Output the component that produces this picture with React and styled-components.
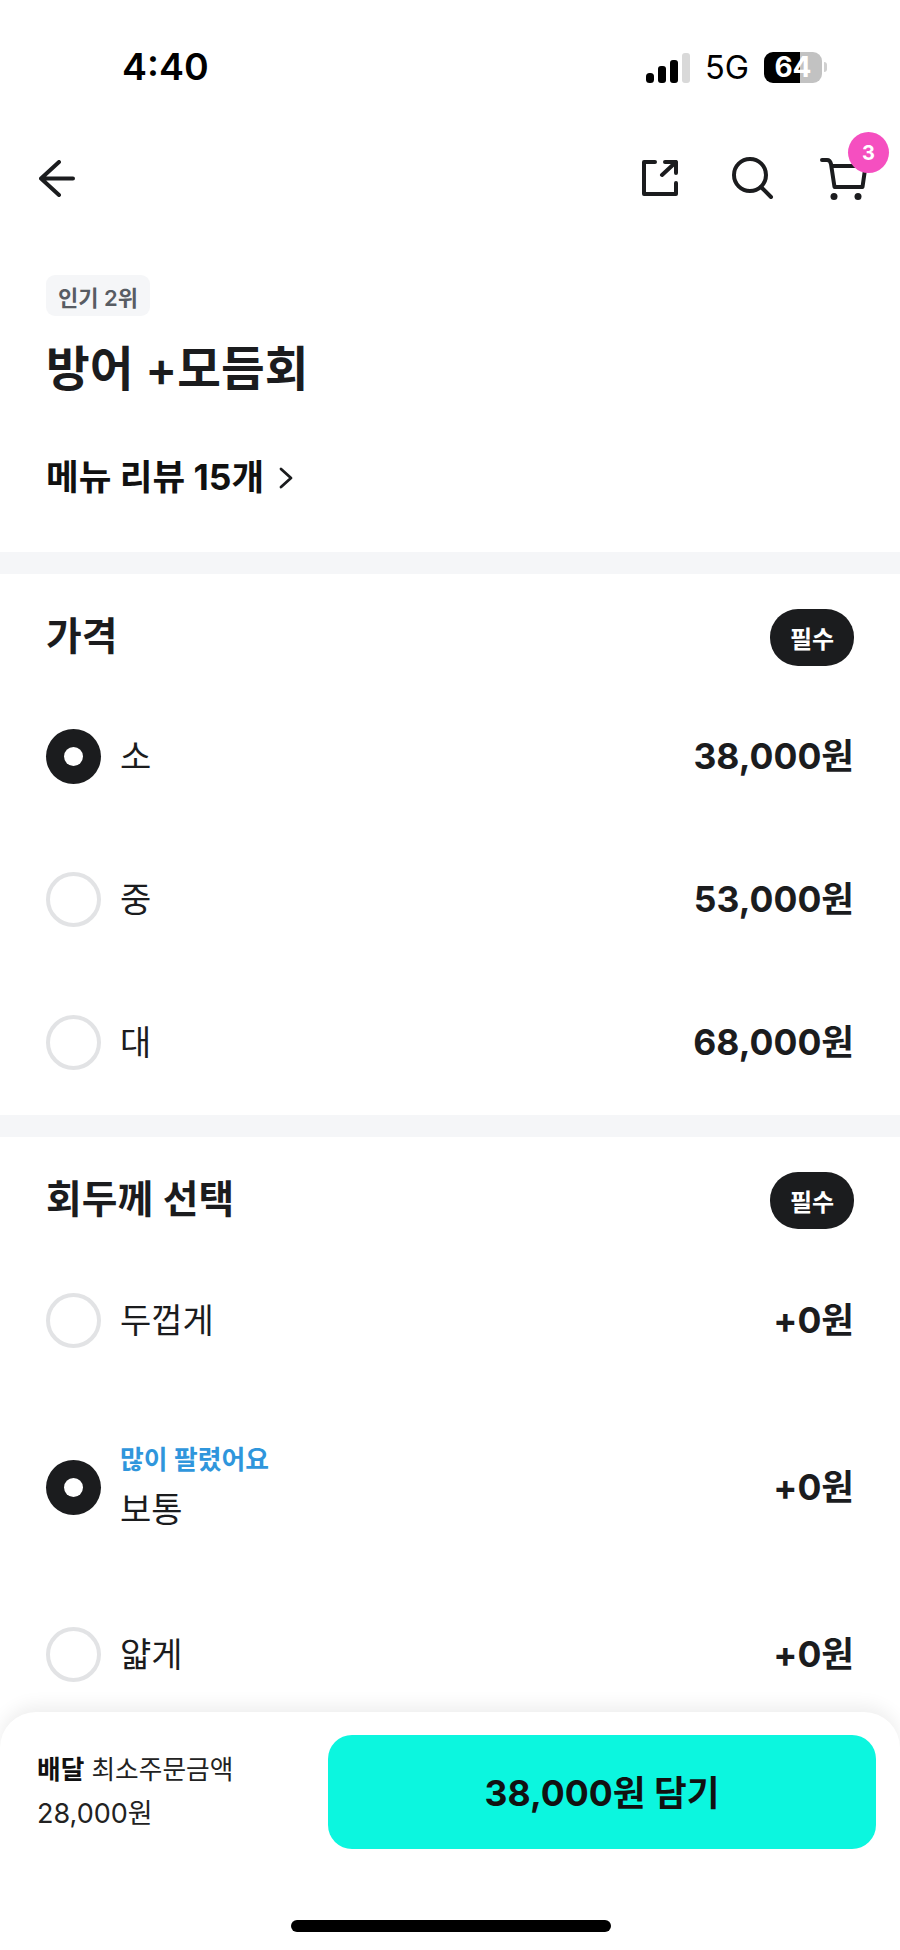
import styled, { createGlobalStyle } from "styled-components";

const GlobalStyle = createGlobalStyle`
  * { box-sizing: border-box; }
  html, body { margin: 0; padding: 0; background: #ffffff; }
  body {
    font-family: "Inter", "Noto Sans CJK KR", sans-serif;
    color: #1b1c1e;
  }
`;

const priceOptions = [
  { name: "소", price: "38,000원", checked: true },
  { name: "중", price: "53,000원" },
  { name: "대", price: "68,000원" },
];

const thicknessOptions = [
  { name: "두껍게", price: "+0원", height: 167 },
  { name: "보통", price: "+0원", hint: "많이 팔렸어요", checked: true, height: 167 },
  { name: "얇게", price: "+0원", height: 167 },
];

function BackIcon() {
  return (
    <svg width="36" height="37" viewBox="0 0 36 37" fill="none" stroke="#1b1c1e" strokeWidth="4" strokeLinecap="round" strokeLinejoin="round">
      <path d="M34 18.500H2M20 2 2 18.500 20 35" />
    </svg>
  );
}

function ShareIcon() {
  return (
    <svg width="36" height="36" viewBox="0 0 36 36" fill="none" stroke="#1b1c1e" strokeWidth="4" strokeLinecap="round" strokeLinejoin="round">
      <path d="M13 2H2v32h32V23" />
      <path d="M23 2h11v11M34 2 20 15" />
    </svg>
  );
}

function SearchIcon() {
  return (
    <svg width="42" height="42" viewBox="0 0 42 42" fill="none" stroke="#1b1c1e" strokeWidth="4" strokeLinecap="round">
      <circle cx="18" cy="18" r="16" />
      <path d="M29 30 39 40" />
    </svg>
  );
}

function CartIcon() {
  return (
    <svg width="48" height="44" viewBox="0 0 48 44" fill="none" stroke="#1b1c1e" strokeWidth="4" strokeLinecap="round" strokeLinejoin="round">
      <path d="M3 3h5c2 0 3.500 1.500 4 4l3.500 23h28l3-21H13" />
      <circle cx="15" cy="39.500" r="3.500" fill="#1b1c1e" stroke="none" />
      <circle cx="39" cy="39.500" r="3.500" fill="#1b1c1e" stroke="none" />
    </svg>
  );
}

function SignalIcon() {
  return (
    <svg width="44" height="30" viewBox="0 0 44 30">
      <rect x="0" y="20" width="8" height="10" rx="3.500" fill="#000" />
      <rect x="12" y="13" width="8" height="17" rx="3" fill="#000" />
      <rect x="24" y="7" width="8" height="23" rx="3" fill="#000" />
      <rect x="36" y="0" width="8" height="30" rx="3" fill="#d9d9d9" />
    </svg>
  );
}

function Chevron() {
  return (
    <svg width="16" height="24" viewBox="0 0 16 24" fill="none" stroke="#1b1c1e" strokeWidth="2.800" strokeLinecap="round" strokeLinejoin="round">
      <path d="M3 3l10 9-10 9" />
    </svg>
  );
}

function OptionRow({ option }) {
  return (
    <Row $height={option.height}>
      <Radio $checked={option.checked} />
      <RowLabel>
        {option.hint && <Hint>{option.hint}</Hint>}
        <RowName>{option.name}</RowName>
      </RowLabel>
      <RowPrice>{option.price}</RowPrice>
    </Row>
  );
}

export default function App() {
  return (
    <Page>
      <GlobalStyle />
      <Content>
        <StatusBar>
          <Clock>4:40</Clock>
          <StatusRight>
            <SignalIcon />
            <Network>5G</Network>
            <Battery>
              <BatteryText>64</BatteryText>
            </Battery>
            <BatteryCap />
          </StatusRight>
        </StatusBar>

        <NavBar>
          <BackIcon />
          <NavActions>
            <ShareWrap>
              <ShareIcon />
            </ShareWrap>
            <SearchIcon />
            <CartWrap>
              <CartIcon />
              <CartBadge>3</CartBadge>
            </CartWrap>
          </NavActions>
        </NavBar>

        <Intro>
          <RankTag>인기 2위</RankTag>
          <MenuTitle>방어 +모듬회</MenuTitle>
          <ReviewLink>
            메뉴 리뷰 15개
            <Chevron />
          </ReviewLink>
        </Intro>

        <Divider />

        <Section>
          <SectionHead $height={111}>
            <SectionTitle>가격</SectionTitle>
            <RequiredPill>필수</RequiredPill>
          </SectionHead>
          {priceOptions.map((option) => (
            <OptionRow key={option.name} option={option} />
          ))}
        </Section>

        <Divider />

        <Section>
          <SectionHead $height={100}>
            <SectionTitle>회두께 선택</SectionTitle>
            <RequiredPill>필수</RequiredPill>
          </SectionHead>
          {thicknessOptions.map((option) => (
            <OptionRow key={option.name} option={option} />
          ))}
        </Section>
      </Content>

      <BottomSheet>
        <SheetMain>
          <MinOrder>
            <MinOrderLine>
              <strong>배달</strong> 최소주문금액
            </MinOrderLine>
            <MinOrderLine $amount>28,000원</MinOrderLine>
          </MinOrder>
          <AddButton>38,000원 담기</AddButton>
        </SheetMain>
        <HomeBar />
      </BottomSheet>
    </Page>
  );
}

const Page = styled.div`
  width: 900px;
  height: 1950px;
  display: flex;
  flex-direction: column;
  overflow: hidden;
  background: #ffffff;
`;

const Content = styled.div`
  height: 1712px;
  flex: none;
  overflow: hidden;
`;

const StatusBar = styled.div`
  height: 134px;
  padding: 46px 73px 0 122px;
  display: flex;
  justify-content: space-between;
  align-items: flex-start;
`;

const Clock = styled.div`
  font-size: 37.500px;
  line-height: 42px;
  font-weight: 600;
  color: #000;
`;

const StatusRight = styled.div`
  display: flex;
  align-items: center;
  height: 42px;
  svg { margin-top: 2px; }
`;

const Network = styled.div`
  font-size: 32.500px;
  font-weight: 400;
  color: #000;
  margin: 0 15px 0 15px;
`;

const Battery = styled.div`
  width: 58px;
  height: 31px;
  border-radius: 9px;
  background: linear-gradient(90deg, #000 0 62%, #c2c2c2 62% 100%);
  display: flex;
  align-items: center;
  justify-content: center;
`;

const BatteryText = styled.span`
  color: #fff;
  font-size: 28px;
  font-weight: 700;
`;

const BatteryCap = styled.div`
  width: 3px;
  height: 10px;
  margin-left: 2px;
  border-radius: 0 3px 3px 0;
  background: #d0d0d0;
`;

const NavBar = styled.div`
  height: 88px;
  padding: 0 33px 0 39px;
  display: flex;
  justify-content: space-between;
  align-items: center;
`;

const NavActions = styled.div`
  display: flex;
  align-items: center;
  gap: 45px;
`;

const ShareWrap = styled.div`
  display: flex;
  margin-right: 9px;
`;

const CartWrap = styled.div`
  position: relative;
  display: flex;
  margin-top: 2px;
`;

const CartBadge = styled.div`
  position: absolute;
  top: -25px;
  right: -22px;
  width: 41px;
  height: 41px;
  border-radius: 50%;
  background: #f54fc0;
  color: #fff;
  font-size: 20px;
  font-weight: 700;
  display: flex;
  align-items: center;
  justify-content: center;
`;

const Intro = styled.div`
  padding: 53px 46px 0;
  height: 330px;
`;

const RankTag = styled.div`
  display: inline-flex;
  align-items: center;
  height: 41px;
  padding: 0 12px;
  border-radius: 9px;
  background: #f5f6f8;
  color: #585c63;
  font-size: 22px;
  font-weight: 600;
`;

const MenuTitle = styled.h1`
  margin: 21px 0 0;
  font-size: 47.500px;
  line-height: 64px;
  font-weight: 600;
  color: #1b1c1e;
`;

const ReviewLink = styled.div`
  margin-top: 55px;
  display: flex;
  align-items: center;
  gap: 14px;
  font-size: 35.500px;
  line-height: 44px;
  font-weight: 700;
  color: #111;
`;

const Divider = styled.div`
  height: 22px;
  background: #f5f6f8;
`;

const Section = styled.section`
  padding: 0 46px 1px;
`;

const SectionHead = styled.div`
  height: ${(p) => p.$height}px;
  padding-top: 35px;
  display: flex;
  justify-content: space-between;
  align-items: flex-start;
`;

const SectionTitle = styled.h2`
  margin: 0;
  font-size: 38.800px;
  line-height: 54px;
  font-weight: 600;
  color: #1b1c1e;
`;

const RequiredPill = styled.div`
  width: 84px;
  height: 57px;
  border-radius: 28px;
  background: #1b1c1e;
  color: #fff;
  font-size: 24px;
  font-weight: 600;
  display: flex;
  align-items: center;
  justify-content: center;
`;

const Row = styled.div`
  height: ${(p) => p.$height || 143}px;
  display: flex;
  align-items: center;
`;

const Radio = styled.div`
  width: 55px;
  height: 55px;
  flex: none;
  border-radius: 50%;
  background: ${(p) => (p.$checked ? "#1b1c1e" : "#fff")};
  border: ${(p) => (p.$checked ? "none" : "4px solid #e2e3e5")};
  display: flex;
  align-items: center;
  justify-content: center;
  &::after {
    content: "";
    display: ${(p) => (p.$checked ? "block" : "none")};
    width: 19px;
    height: 19px;
    border-radius: 50%;
    background: #fff;
  }
`;

const RowLabel = styled.div`
  flex: 1;
  margin-left: 19px;
`;

const Hint = styled.div`
  font-size: 25.800px;
  line-height: 34px;
  font-weight: 600;
  color: #2f96dc;
  margin-bottom: 10px;
`;

const RowName = styled.div`
  font-size: 34px;
  line-height: 46px;
  font-weight: 400;
  color: #1b1c1e;
`;

const RowPrice = styled.div`
  font-size: 35.500px;
  line-height: 44px;
  font-weight: 700;
  color: #1b1c1e;
`;

const BottomSheet = styled.div`
  position: relative;
  flex: 1;
  background: #fff;
  border-radius: 36px 36px 0 0;
  box-shadow: 0 -6px 18px rgba(0, 0, 0, 0.07);
  padding: 23px 24px 0 37px;
`;

const SheetMain = styled.div`
  display: flex;
  justify-content: space-between;
  align-items: center;
`;

const MinOrder = styled.div`
  display: flex;
  flex-direction: column;
  gap: 6px;
`;

const MinOrderLine = styled.div`
  font-size: ${(p) => (p.$amount ? 27 : 25.7)}px;
  line-height: 38px;
  color: #222;
  strong { font-weight: 700; color: #111; }
`;

const AddButton = styled.div`
  width: 548px;
  height: 114px;
  padding-bottom: 4px;
  border-radius: 24px;
  background: #0cf6df;
  color: #111;
  font-size: 35.600px;
  font-weight: 700;
  display: flex;
  align-items: center;
  justify-content: center;
`;

const HomeBar = styled.div`
  position: absolute;
  left: 291px;
  bottom: 18px;
  width: 320px;
  height: 12px;
  border-radius: 6px;
  background: #000;
`;
